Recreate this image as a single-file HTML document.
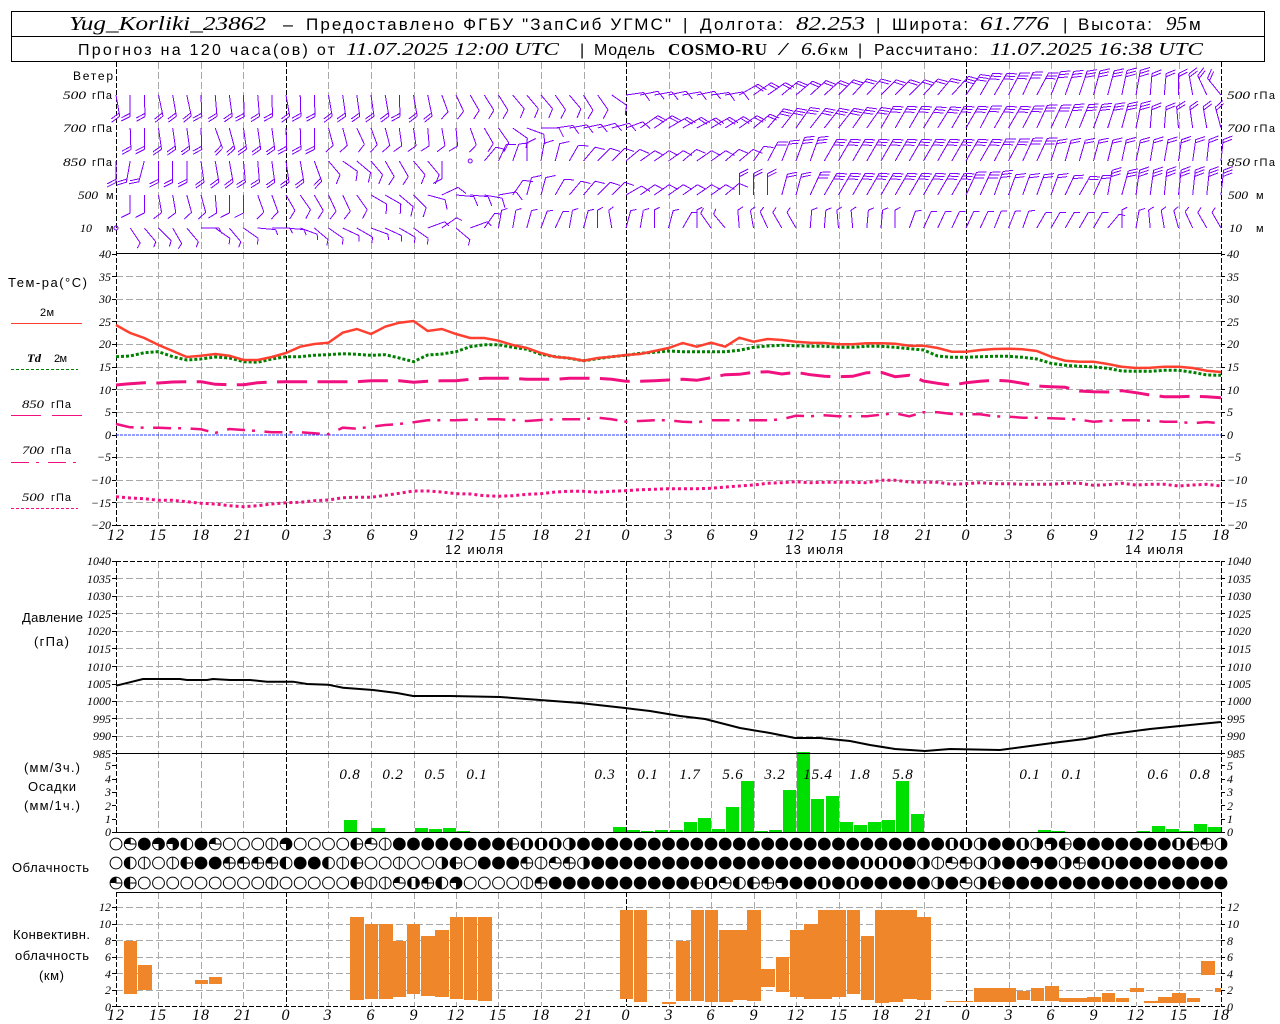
<!DOCTYPE html>
<html><head><meta charset="utf-8">
<style>
html,body{margin:0;padding:0;background:#fff;width:1280px;height:1024px;overflow:hidden}
svg{display:block}
text{fill:#000;white-space:pre}
.s{font-family:"Liberation Sans","DejaVu Sans",sans-serif}
.i{font-family:"Liberation Serif","Noto Serif CJK SC",serif;font-style:italic}
.b{font-family:"Liberation Serif","Noto Serif CJK SC",serif;font-weight:bold}
</style></head><body>
<svg xmlns="http://www.w3.org/2000/svg" width="1280" height="1024" viewBox="0 0 1280 1024">
<rect width="1280" height="1024" fill="#fff"/>
<g id="gfx"></g>
<rect x="11.5" y="11.5" width="1253" height="50" fill="none" stroke="#000" shape-rendering="crispEdges"/>
<path d="M11 36.5H1265" stroke="#000" shape-rendering="crispEdges"/>
<g class="s" font-size="17">
<text class="i" x="69" y="30" font-size="20" textLength="197">Yug_Korliki_23862</text>
<text x="283" y="30" textLength="10" lengthAdjust="spacingAndGlyphs">–</text>
<text x="306" y="30" textLength="365">Предоставлено ФГБУ "ЗапСиб УГМС"</text>
<text x="683" y="30">|</text>
<text x="700" y="30" textLength="83">Долгота:</text>
<text class="i" x="796" y="30" font-size="20" textLength="69">82.253</text>
<text x="876" y="30">|</text>
<text x="892" y="30" textLength="76">Широта:</text>
<text class="i" x="980" y="30" font-size="20" textLength="69">61.776</text>
<text x="1063" y="30">|</text>
<text x="1078" y="30" textLength="74">Высота:</text>
<text class="i" x="1166" y="30" font-size="20" textLength="21">95</text>
<text x="1189" y="30" textLength="11">м</text>
</g>
<g class="s" font-size="16">
<text x="78" y="55" textLength="257">Прогноз на 120 часа(ов) от</text>
<text class="i" x="346" y="55" font-size="18" textLength="213">11.07.2025 12:00 UTC</text>
<text x="580" y="55">|</text>
<text x="594" y="55" textLength="61">Модель</text>
<text class="b" x="668" y="55" font-size="17" textLength="99">COSMO-RU</text>
<text class="i" x="779" y="55" font-size="18" textLength="8">/</text>
<text class="i" x="801" y="55" font-size="18" textLength="27">6.6</text>
<text x="830" y="55" font-size="14" textLength="18">км</text>
<text x="858" y="55">|</text>
<text x="874" y="55" textLength="104">Рассчитано:</text>
<text class="i" x="990" y="55" font-size="18" textLength="213">11.07.2025 16:38 UTC</text>
</g>
<g class="s" font-size="12">
<text x="73" y="80" textLength="40">Ветер</text>
<text x="8" y="287" font-size="13" textLength="79">Тем-ра(°C)</text>
<text x="40" y="316" font-size="11" textLength="14">2м</text>
<text class="i" x="27" y="362" font-size="12" font-weight="bold" textLength="14">Td</text><text x="54" y="362" font-size="11" textLength="13">2м</text>
<text class="i" x="22" y="408" textLength="22">850</text><text x="51" y="408" font-size="11" textLength="20">гПа</text>
<text class="i" x="22" y="454" textLength="22">700</text><text x="51" y="454" font-size="11" textLength="20">гПа</text>
<text class="i" x="22" y="501" textLength="22">500</text><text x="51" y="501" font-size="11" textLength="20">гПа</text>
<text x="22" y="622" font-size="13" textLength="61">Давление</text>
<text x="34" y="646" font-size="13" textLength="35">(гПа)</text>
<text x="24" y="772" font-size="13" textLength="56">(мм/3ч.)</text>
<text x="28" y="791" font-size="13" textLength="48">Осадки</text>
<text x="24" y="810" font-size="13" textLength="56">(мм/1ч.)</text>
<text x="12" y="872" font-size="13" textLength="77">Облачность</text>
<text x="13" y="939" font-size="13" textLength="77">Конвективн.</text>
<text x="15" y="960" font-size="13" textLength="74">облачность</text>
<text x="39" y="980" font-size="13" textLength="25">(км)</text>
</g>
<g class="i" font-size="12">
<text x="63" y="99" textLength="23">500</text><text x="63" y="132" textLength="23">700</text><text x="63" y="166" textLength="23">850</text><text x="78" y="199" textLength="20">500</text><text x="80" y="232" textLength="12">10</text>
<text x="1227" y="99" textLength="23">500</text><text x="1227" y="132" textLength="23">700</text><text x="1227" y="166" textLength="23">850</text><text x="1228" y="199" textLength="20">500</text><text x="1229" y="232" textLength="13">10</text>
</g>
<g class="s" font-size="11">
<text x="92" y="99" textLength="20">гПа</text><text x="92" y="132" textLength="20">гПа</text><text x="92" y="166" textLength="20">гПа</text><text x="106" y="199">м</text><text x="106" y="232">м</text>
<text x="1254" y="99" textLength="21">гПа</text><text x="1254" y="132" textLength="21">гПа</text><text x="1254" y="166" textLength="21">гПа</text><text x="1256" y="199">м</text><text x="1256" y="232">м</text>
</g>
<g class="i" font-size="12" text-anchor="end">
<text x="111" y="258">40</text><text x="111" y="281">35</text><text x="111" y="303">30</text><text x="111" y="326">25</text><text x="111" y="348">20</text><text x="111" y="371">15</text><text x="111" y="394">10</text><text x="111" y="416">5</text><text x="111" y="439">0</text><text x="111" y="461">−5</text><text x="111" y="484">−10</text><text x="111" y="507">−15</text><text x="111" y="529">−20</text>
<text x="111" y="565">1040</text><text x="111" y="583">1035</text><text x="111" y="600">1030</text><text x="111" y="618">1025</text><text x="111" y="635">1020</text><text x="111" y="653">1015</text><text x="111" y="671">1010</text><text x="111" y="688">1005</text><text x="111" y="705">1000</text><text x="111" y="723">995</text><text x="111" y="740">990</text><text x="111" y="758">985</text>
<text x="111" y="770">5</text><text x="111" y="783">4</text><text x="111" y="796">3</text><text x="111" y="810">2</text><text x="111" y="823">1</text><text x="111" y="836">0</text>
<text x="111" y="911">12</text><text x="111" y="928">10</text><text x="111" y="945">8</text><text x="111" y="961">6</text><text x="111" y="978">4</text><text x="111" y="994">2</text><text x="111" y="1011">0</text>
</g>
<g class="i" font-size="12">
<text x="1227" y="258">40</text><text x="1227" y="281">35</text><text x="1227" y="303">30</text><text x="1227" y="326">25</text><text x="1227" y="348">20</text><text x="1227" y="371">15</text><text x="1227" y="394">10</text><text x="1227" y="416">5</text><text x="1227" y="439">0</text><text x="1227" y="461">−5</text><text x="1227" y="484">−10</text><text x="1227" y="507">−15</text><text x="1227" y="529">−20</text>
<text x="1227" y="565">1040</text><text x="1227" y="583">1035</text><text x="1227" y="600">1030</text><text x="1227" y="618">1025</text><text x="1227" y="635">1020</text><text x="1227" y="653">1015</text><text x="1227" y="671">1010</text><text x="1227" y="688">1005</text><text x="1227" y="705">1000</text><text x="1227" y="723">995</text><text x="1227" y="740">990</text><text x="1227" y="758">985</text>
<text x="1227" y="770">5</text><text x="1227" y="783">4</text><text x="1227" y="796">3</text><text x="1227" y="810">2</text><text x="1227" y="823">1</text><text x="1227" y="836">0</text>
<text x="1227" y="911">12</text><text x="1227" y="928">10</text><text x="1227" y="945">8</text><text x="1227" y="961">6</text><text x="1227" y="978">4</text><text x="1227" y="994">2</text><text x="1227" y="1011">0</text>
</g>
<g class="i" font-size="16" text-anchor="middle" letter-spacing="1">
<text x="116" y="540">12</text><text x="158" y="540">15</text><text x="201" y="540">18</text><text x="243" y="540">21</text><text x="286" y="540">0</text><text x="328" y="540">3</text><text x="371" y="540">6</text><text x="414" y="540">9</text><text x="456" y="540">12</text><text x="498" y="540">15</text><text x="541" y="540">18</text><text x="584" y="540">21</text><text x="626" y="540">0</text><text x="669" y="540">3</text><text x="711" y="540">6</text><text x="754" y="540">9</text><text x="796" y="540">12</text><text x="839" y="540">15</text><text x="881" y="540">18</text><text x="924" y="540">21</text><text x="966" y="540">0</text><text x="1009" y="540">3</text><text x="1051" y="540">6</text><text x="1094" y="540">9</text><text x="1136" y="540">12</text><text x="1179" y="540">15</text><text x="1221" y="540">18</text>
<text x="116" y="1020">12</text><text x="158" y="1020">15</text><text x="201" y="1020">18</text><text x="243" y="1020">21</text><text x="286" y="1020">0</text><text x="328" y="1020">3</text><text x="371" y="1020">6</text><text x="414" y="1020">9</text><text x="456" y="1020">12</text><text x="498" y="1020">15</text><text x="541" y="1020">18</text><text x="584" y="1020">21</text><text x="626" y="1020">0</text><text x="669" y="1020">3</text><text x="711" y="1020">6</text><text x="754" y="1020">9</text><text x="796" y="1020">12</text><text x="839" y="1020">15</text><text x="881" y="1020">18</text><text x="924" y="1020">21</text><text x="966" y="1020">0</text><text x="1009" y="1020">3</text><text x="1051" y="1020">6</text><text x="1094" y="1020">9</text><text x="1136" y="1020">12</text><text x="1179" y="1020">15</text><text x="1221" y="1020">18</text>
</g>
<g class="s" font-size="13">
<text x="445" y="554" textLength="58">12 июля</text><text x="785" y="554" textLength="58">13 июля</text><text x="1125" y="554" textLength="58">14 июля</text>
</g>
<g class="i" font-size="15" text-anchor="middle" letter-spacing=".8">
<text x="350" y="779">0.8</text><text x="393" y="779">0.2</text><text x="435" y="779">0.5</text><text x="477" y="779">0.1</text><text x="605" y="779">0.3</text><text x="648" y="779">0.1</text><text x="690" y="779">1.7</text><text x="733" y="779">5.6</text><text x="775" y="779">3.2</text><text x="818" y="779">15.4</text><text x="860" y="779">1.8</text><text x="903" y="779">5.8</text><text x="1030" y="779">0.1</text><text x="1072" y="779">0.1</text><text x="1158" y="779">0.6</text><text x="1200" y="779">0.8</text>
</g>
</svg>
<script>
(function(){
document.querySelectorAll('.i[textLength],.i [textLength]').forEach(function(e){e.setAttribute('lengthAdjust','spacingAndGlyphs')});
var o=[],X=[116,158,201,243,286,328,371,414,456,498,541,584,626,669,711,754,796,839,881,924,966,1009,1051,1094,1136,1179,1221],st=1105/78;
function nx(n){return 116+st*n}
function L(x1,y1,x2,y2,c,d,w){o.push('<path d="M'+x1+' '+y1+'L'+x2+' '+y2+'" stroke="'+c+'" fill="none" stroke-width="'+(w||1)+'"'+(d?' stroke-dasharray="'+d+'"':'')+' shape-rendering="crispEdges"/>')}
function R(a,t,b,B,c){o.push('<rect x="'+a+'" y="'+t+'" width="'+(b-a)+'" height="'+(B-t)+'" fill="'+c+'" shape-rendering="crispEdges"/>')}
var gr='#a9a9a9',gd='7 3';
var g=[[344,357,820],[371,385,828],[415,428,828],[429,442,829],[443,456,828],[457,470,831],[613,626,827],[627,640,830],[641,653,831],[655,668,830],[670,683,830],[684,697,822],[698,711,818],[712,725,829],[726,739,807],[741,754,781],[755,768,831],[769,782,830],[783,796,790],[797,810,752],[811,824,799],[826,839,796],[840,853,822],[854,867,825],[868,881,822],[882,895,820],[896,909,781],[911,924,814],[1038,1051,830],[1052,1065,831],[1137,1150,831],[1152,1165,826],[1166,1179,829],[1180,1193,831],[1194,1207,824],[1208,1221,827]];
[276,299,321,344,367,389,412,457,480,502,578,596,613,631,648,666,684,701,718,736,907,924,940,957,973,990].forEach(function(y){L(116,y+.5,1221,y+.5,gr,gd)});
X.forEach(function(x,i){var c=(i==0||i==4||i==12||i==20||i==26),col=c?'#000':gr,d=c?'5 2':gd;
 L(x+.5,62,x+.5,525,col,d);L(x+.5,561,x+.5,832,col,d);L(x+.5,892,x+.5,1006,col,d)});
g.forEach(function(b){R(b[0],b[2],b[1],832,'#00e000')});
var a=[[124,137,941,994],[138,152,965,990],[195,208,980,984],[209,222,977,984],[350,364,917,1000],[365,378,924,999],[379,393,924,999],[393,406,941,997],[407,420,924,994],[421,435,936,996],[435,449,930,997],[450,463,917,999],[464,477,917,1000],[478,492,917,1001],[620,633,910,999],[634,647,910,1002],[662,676,1002,1004],[676,690,941,1001],[691,704,910,1001],[705,718,910,1002],[719,733,930,1002],[733,747,930,1000],[747,761,910,1001],[761,775,969,987],[776,789,957,992],[790,804,930,997],[804,818,924,999],[818,832,910,999],[832,846,910,997],[847,860,910,994],[861,874,936,1000],[875,889,910,1003],[889,903,910,1002],[903,917,910,999],[917,931,917,1000],[946,960,1001,1002],[960,973,1001,1002],[974,988,988,1002],[988,1002,988,1002],[1002,1016,988,1002],[1017,1030,991,1000],[1031,1044,988,1001],[1045,1059,986,1001],[1059,1073,998,1002],[1073,1087,998,1002],[1087,1101,997,1002],[1102,1115,993,1002],[1116,1129,998,1002],[1130,1144,988,992],[1144,1158,1001,1003],[1158,1172,997,1003],[1172,1186,993,1003],[1187,1200,998,1002],[1201,1215,961,975],[1215,1221,988,992]];
a.forEach(function(b){R(b[0],b[2],b[1],b[3],'#f0862a')});
L(116,253.5,1221,253.5,'#000');L(116,525.5,1221,525.5,'#000','5 2');L(116,561.5,1221,561.5,'#000','5 2');L(116,753.5,1221,753.5,'#000');L(116,832.5,1221,832.5,'#000');L(116,892.5,1221,892.5,'#000');L(116,1006.5,1221,1006.5,'#000','5 2');
L(116,435,1221,435,'#2a3cff','3 1');
[254,276,299,321,344,367,389,412,435,457,480,502,525,561,578,596,613,631,648,666,684,701,718,736,753,765,779,792,805,819,832,907,924,940,957,973,990,1006].forEach(function(y){L(112,y+.5,116,y+.5,'#000');L(1221,y+.5,1225,y+.5,'#000')});
function S(arr,c,w,d){var p=arr.map(function(y,i){return nx(i).toFixed(1)+' '+y}).join(' ');o.push('<polyline points="'+p+'" fill="none" stroke="'+c+'" stroke-width="'+w+'"'+(d?' stroke-dasharray="'+d+'"':'')+'/>')}
S([496.7,498,498.7,500.3,500.3,501.7,503.3,504,505.7,506.7,505.7,504,502.7,502.3,500.7,500,497.7,497.3,497.3,495.3,493.3,491,491,492,493.7,494,495.7,496.3,495.7,494.3,493.7,492,491.3,491.3,492.3,491.3,490.7,489.7,489.3,488.7,488.7,488.7,488.3,487,486,485,483.3,482.7,481.7,482.7,482.3,482.3,482.3,482.7,480.3,480.3,482,482.3,482.3,484.3,483.7,482.7,483.7,483.7,484.3,484.3,484.3,483.3,483.3,485.3,484.7,483.3,485,484.3,484.3,486,485,484.3,486],'#f0107f',3,'3 3');
S([424,427.3,427.7,427.7,428.3,428.3,429.3,433,429,430,431,432.3,432.3,432.3,433.3,434.3,427.7,428.7,426.7,425,424,422.3,420.3,420.3,420.3,419.7,419.3,419.3,420,421,420,419.3,419.3,419.3,417.7,419.3,421.7,421,420.3,420.3,421.7,422.3,420.3,420.3,420.3,420.3,420.3,419.3,415.7,416.3,415.3,416.3,416.3,416.3,414.7,413.3,416.3,412.3,412.3,414,414.3,414.3,416.3,416.7,417.7,417.7,418.3,418.7,419.7,421.7,420.7,420.3,420.3,420.7,421.7,421.7,423.3,422,423.3],'#f0107f',2.5,'18 7 3 9.5');
S([385,383.7,382.7,383,382,381.7,381.7,384.3,384.7,384.7,382.7,382,381.7,381.7,381.7,381.7,381.7,381.7,380.7,380.7,380.7,382.3,381.3,380.7,380.7,379.3,378.3,378.3,378.3,379.3,379.3,379.3,378.3,378.3,378.3,379.3,381.3,381.3,380.7,380,379.3,380.3,377.7,374.7,374.3,372.3,371.7,374,372.3,374.7,376.3,376.7,376.3,372.7,372.3,376.7,375.3,381,383.3,385.3,382.7,381.3,380.3,381,383.3,386,386.7,387.3,391,391.7,392,390.7,392.7,395,396.7,396.7,396.3,396.7,397.7],'#f0107f',3,'30 10.4');
S([356.7,356,352.7,351.7,356.7,360,359,357,358,361.7,362.3,359,356.7,356.7,355.3,354.7,353.7,354.3,355.3,354.7,358,361.7,355,354,351.7,346.7,344.7,344.7,347.3,349.3,354.3,356.7,358.3,360.7,358.7,356.7,355.3,353.3,352.3,351,351.7,351.7,351.7,351.7,350.3,347.3,346,345.3,345.7,346.3,346.3,347.3,347.3,346.3,346.3,347.3,348.7,350,356,357.3,357.3,356.7,356.3,356.3,357.3,359,363.3,365.3,366.3,367,368.3,371,371.3,371.3,370.3,370.3,372.3,375,375.3],'#008000',3,'3 2');
S([325,333,338,345,351,357,355.7,354,355.7,360,360,357,353,346.7,344,342.7,332.7,329,334,326.7,322.7,321,331,329,334,338,338,340.7,345,348,353,357,358,360.7,358,356.7,355,354,351,348,343,346.7,342.7,346.7,337.7,341.7,339,340,341.7,342.7,343,344.3,344.3,343.3,343.3,343.7,345.7,345.7,348,351.7,351.7,350,349,348.7,349.3,351,356.7,360.7,361.7,361.7,364,366.7,368,367.7,366.7,366.7,368,370.7,372],'#ff4030',2.5);
var pr=[116,685.7,143,679,180,679,187,680,207,680,213,679,230,680,250,680,267,681.7,293,681.7,307,684,328,684.7,343,687.7,373,690,397,693,413,696,450,696,500,697,540,700,580,703,625,708,650,711,680,716,705,719,740,728,770,733,795,738,820,738,850,741,870,745,895,749,925,751,950,749,1000,750,1030,746,1060,742,1085,739,1105,735,1150,729,1200,724,1221,722];
o.push('<polyline points="'+pr.join(' ')+'" fill="none" stroke="#000" stroke-width="2"/>');
L(11,323.5,82,323.5,'#ff4030');L(11,369.5,78,369.5,'#008000','3 2');L(11,415.5,41,415.5,'#f0107f');L(52,415.5,82,415.5,'#f0107f');L(11,462.5,78,462.5,'#f0107f','18 7 3 9');L(11,508.5,78,508.5,'#f0107f','3 2');
var W=[[95,[170,180,178,168,170,168,178,175,172,178,175,178,170,178,178,170,172,172,172,170,178,170,168,160,155,150,148,148,140,140,140,145,140,148,145,125,82,78,80,78,80,78,82,80,60,55,55,50,50,48,48,45,42,42,45,45,45,42,40,42,35,30,30,28,25,28,22,20,18,15,15,12,10,5,5,0,-10,-25,-39],[[23,2],[21,1],[15,2],[14,3],[6,2]]],
[128,[999,178,180,172,172,172,178,160,165,172,172,172,178,178,180,165,165,155,160,165,172,172,175,170,175,160,150,145,125,110,90,82,80,78,75,75,70,55,55,60,60,62,60,58,55,50,40,38,35,38,38,38,35,35,30,30,30,32,32,30,30,28,30,30,28,25,25,22,22,20,18,15,12,5,5,-5,-8,-10,-15],[[15,2],[14,1],[8,1],[9,2],[27,3],[6,2]]],
[161,[180,190,195,180,180,180,172,170,170,175,175,172,172,170,160,140,125,130,140,150,150,140,140,180,999,998,40,25,20,0,10,15,30,40,45,45,50,55,55,55,50,55,55,50,50,35,28,22,20,20,30,30,30,30,30,30,30,30,30,30,30,30,28,28,25,25,18,16,16,15,14,12,12,10,10,8,8,6,6],[[15,2],[31,1],[2,2],[18,3],[13,2]]],
[195,[999,180,180,170,170,165,165,175,180,180,160,160,150,145,150,155,155,145,120,120,130,135,105,65,95,95,100,80,35,15,15,30,40,40,45,45,60,55,55,55,55,55,55,50,0,0,0,15,15,25,30,30,30,30,30,30,30,30,30,30,25,25,20,20,20,20,20,25,30,25,10,15,8,8,6,6,6,6,6],[[44,1],[5,2],[14,3],[7,2],[9,3]]],
[228,[998,146,140,135,150,140,90,125,140,125,95,90,95,110,130,125,115,120,110,115,120,125,70,55,130,70,35,10,10,15,20,25,10,15,0,-10,15,10,0,15,30,0,-35,-40,-5,-10,-25,-30,-30,5,5,-5,-5,5,5,0,20,25,25,25,25,25,22,22,20,30,30,30,30,30,40,0,10,-5,-10,-15,-25,-30,-30],[[79,.6]]]];
var w='',circ='';
W.forEach(function(r){var y=r[0],f=[];r[2].forEach(function(e){for(var k=0;k<e[0];k++)f.push(e[1])});
 r[1].forEach(function(t,n){var x=nx(n);
  if(t==999)return;
  if(t==998){circ+='<circle cx="'+x.toFixed(1)+'" cy="'+y+'" r="2" fill="none" stroke="#7f00ff"/>';return}
  var F=f[n],c=F<1?1:F,L0=18+(c-1)*3.5,fl=F<1?6:10,sn=Math.sin(t*Math.PI/180),cs=-Math.cos(t*Math.PI/180),
  s2=Math.sin((t+63)*Math.PI/180),c2=-Math.cos((t+63)*Math.PI/180),ex=x+L0*sn,ey=y+L0*cs;
  w+='M'+x.toFixed(1)+' '+y+'L'+ex.toFixed(1)+' '+ey.toFixed(1);
  for(var i=0;i<c;i++){var px=ex-i*3.2*sn,py=ey-i*3.2*cs;w+='M'+px.toFixed(1)+' '+py.toFixed(1)+'L'+(px+fl*s2).toFixed(1)+' '+(py+fl*c2).toFixed(1)}
 })});
o.push('<path d="'+w+'" fill="none" stroke="#7f00ff" stroke-width="1" shape-rendering="crispEdges"/>'+circ);
function ff(k){return 'f'.repeat(k)}
var C=[[844,'oqfbbLfqoooiboooohqif'+'fffffffhsssR'+ff(26)+'ssRffsRbh'+ff(7)+'shpR'],
[863,'oLioihffppppLffLihooi'+'ooRhofffpiqpR'+ff(19)+'sss'+'fRiqpRR'+'ffbfRpfs'+ff(8)],
[883,'qhoooooooooiooooohiiq'+'spLbooooip'+ff(10)+'hsqLhpb'+'ffsfs'+ff(5)+'RfqRh'+ff(16)]];
var rx=5.9,ry=5.9;
C.forEach(function(r){var y=r[0];r[1].split('').forEach(function(t,n){var x=+nx(n).toFixed(1),s='';
 var T=y-ry,B=y+ry,Lx=x-rx,Rx=x+rx;
 s+='<ellipse cx="'+x+'" cy="'+y+'" rx="'+rx+'" ry="'+ry+'" fill="'+(t=='f'?'#000':'#fff')+'" stroke="#000"/>';
 var arc=function(a,b,c,d){return 'M'+x+' '+y+'L'+a+' '+b+'A'+rx+' '+ry+' 0 0 1 '+c+' '+d+'Z'};
 var d='',l='';
 if(t=='q'){d=arc(Lx,y,x,T);l='M'+x+' '+T+'V'+y+'H'+Rx}
 if(t=='i'){l='M'+x+' '+T+'V'+B}
 if(t=='L'){d=arc(x,B,x,T)}
 if(t=='R'){d=arc(x,T,x,B)}
 if(t=='h'){d=arc(x,B,x,T);l='M'+x+' '+y+'H'+Rx}
 if(t=='b'){d=arc(x,T,Rx,y)+arc(Rx,y,x,B)+arc(Lx,y,x,T)}
 if(t=='p'){d=arc(Lx,y,x,T);l='M'+x+' '+T+'V'+B+'M'+Lx+' '+y+'H'+Rx}
 if(t=='s'){s='<ellipse cx="'+x+'" cy="'+y+'" rx="'+(rx+.5)+'" ry="'+(ry+.5)+'" fill="#000"/><rect x="'+(x-2)+'" y="'+(y-5)+'" width="4" height="10" fill="#fff"/>'}
 if(d)s+='<path d="'+d+'" fill="#000"/>';
 if(l)s+='<path d="'+l+'" stroke="#000" fill="none"/>';
 o.push(s);
})});
document.getElementById('gfx').innerHTML=o.join('');
})();
</script>
</body></html>
